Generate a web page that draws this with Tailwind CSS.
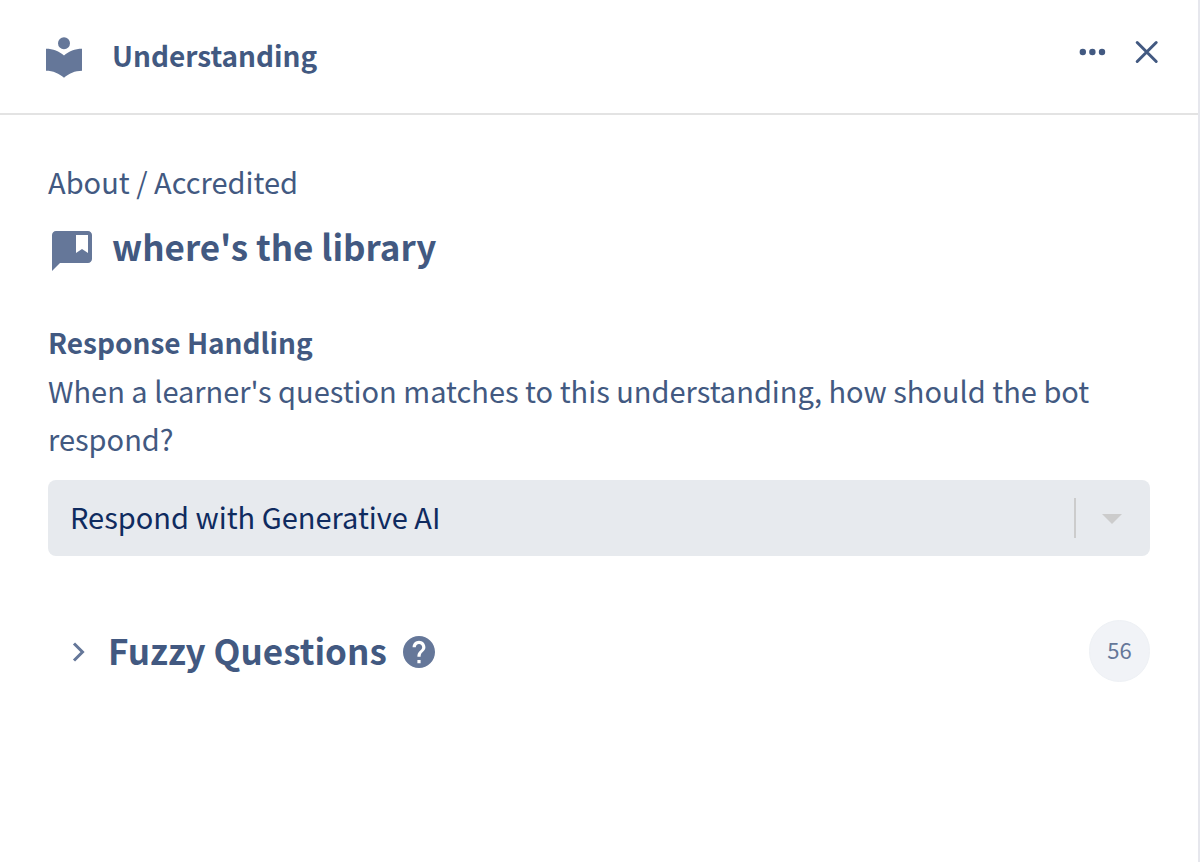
<!DOCTYPE html>
<html lang="en">
<head>
    <meta charset="UTF-8">
    <meta name="viewport" content="width=device-width, initial-scale=1.0">
    <script src="https://cdn.jsdelivr.net/npm/@tailwindcss/browser@4"></script>
    <title>Understanding</title>
</head>
<body class="bg-white font-['Noto_Sans_CJK_SC','Noto_Sans',sans-serif] text-[29px] leading-12 text-[#425981]">
    <div class="min-h-screen border-r-2 border-[#e6e7ed]">
        <!-- Header -->
        <header class="flex items-start justify-between border-b-2 border-[#e3e3e3] pt-8 pb-[33px] pl-10 pr-9">
            <div class="flex h-12 items-center gap-6">
                <svg class="size-12 text-[#657799]" viewBox="0 0 24 24" fill="currentColor" aria-hidden="true">
                    <path d="M12 8.6a3 3 0 1 0 0-6 3 3 0 0 0 0 6zm0 3.15C9.64 9.55 6.48 8.35 3 8.35v11c3.48 0 6.64 1.35 9 3.55 2.36-2.19 5.52-3.55 9-3.55v-11c-3.48 0-6.64 1.2-9 3.4z"/>
                </svg>
                <h1 class="pb-0.5 text-[28px] font-bold">Understanding</h1>
            </div>
            <div class="flex items-center gap-[22px]">
                <button type="button" class="flex h-10 w-8 items-center justify-center" aria-label="More options">
                    <svg class="h-8 w-8" viewBox="0 0 32 32" fill="currentColor">
                        <circle cx="6.8" cy="16" r="3.2"/>
                        <circle cx="16.4" cy="16" r="3.2"/>
                        <circle cx="26" cy="16" r="3.2"/>
                    </svg>
                </button>
                <button type="button" class="flex h-10 w-8 items-center justify-center" aria-label="Close">
                    <svg class="h-8 w-8" viewBox="0 0 32 32" fill="none" stroke="currentColor" stroke-width="3" stroke-linecap="round">
                        <path d="M7.200 6.500l19 19M26.200 6.500l-19 19"/>
                    </svg>
                </button>
            </div>
        </header>

        <main class="px-12 pt-[42px]">
            <p>About / Accredited</p>
            <div class="mt-3 flex items-end gap-4">
                <svg class="size-12 text-[#657799]" viewBox="0 0 24 24" fill="currentColor" aria-hidden="true">
                    <path d="M20 2H4c-1.100 0-2 .9-2 2v18l4-4h14c1.100 0 2-.9 2-2V4c0-1.100-.9-2-2-2zm0 11l-3-2-3 2V4h6v9z"/>
                </svg>
                <h2 class="text-[35px] leading-[58px] font-bold">where's the library</h2>
            </div>

            <!-- Response handling -->
            <label for="response" class="mt-[43px] block">
                <span class="block text-[28px] font-bold">Response Handling</span>
                When a learner's question matches to this understanding, how should the bot respond?
            </label>
            <div class="relative mt-[18px]">
                <select id="response" class="h-[76px] w-full appearance-none rounded-lg bg-[#e7eaee] pb-1 pl-[22px] pr-24 text-[#0f2b5f]">
                    <option>Respond with Generative AI</option>
                </select>
                <div class="pointer-events-none absolute inset-y-0 right-7 flex items-center gap-[26px]">
                    <span class="h-10 w-0.5 bg-[#cccccc]"></span>
                    <svg class="h-3 w-5 text-[#cccccc]" viewBox="0 0 20 12" fill="currentColor"><path d="M0 2h20L10 12z"/></svg>
                </div>
            </div>

            <!-- Fuzzy questions -->
            <div class="mt-16 flex items-center justify-between">
                <div class="flex items-center pt-0.5">
                    <button type="button" class="flex items-center gap-4 pl-4">
                        <svg class="h-8 w-7 text-[#657799]" viewBox="0 0 28 32" fill="none" stroke="currentColor" stroke-width="3">
                            <path d="M10 7.500l8.500 8.500-8.500 8.500"/>
                        </svg>
                        <span class="pb-1 text-[35px] leading-12 font-bold">Fuzzy Questions</span>
                    </button>
                    <button type="button" class="ml-4 text-[#657799]" aria-label="Help">
                        <svg class="size-8" viewBox="2 2 20 20" fill="currentColor">
                            <path d="M12 2C6.480 2 2 6.480 2 12s4.480 10 10 10 10-4.480 10-10S17.520 2 12 2zm1 17h-2v-2h2v2zm2.070-7.750l-.9.920C13.450 12.900 13 13.500 13 15h-2v-.5c0-1.100.450-2.100 1.170-2.830l1.240-1.260c.370-.360.590-.860.590-1.410 0-1.100-.9-2-2-2s-2 .9-2 2H8c0-2.210 1.790-4 4-4s4 1.790 4 4c0 .880-.360 1.680-.930 2.250z"/>
                        </svg>
                    </button>
                </div>
                <span class="flex h-[62px] w-[61px] items-center justify-center rounded-full border border-[#eef1f5] bg-[#f1f3f7] pb-1 text-[22px] text-[#657799]">56</span>
            </div>
        </main>
    </div>
</body>
</html>
